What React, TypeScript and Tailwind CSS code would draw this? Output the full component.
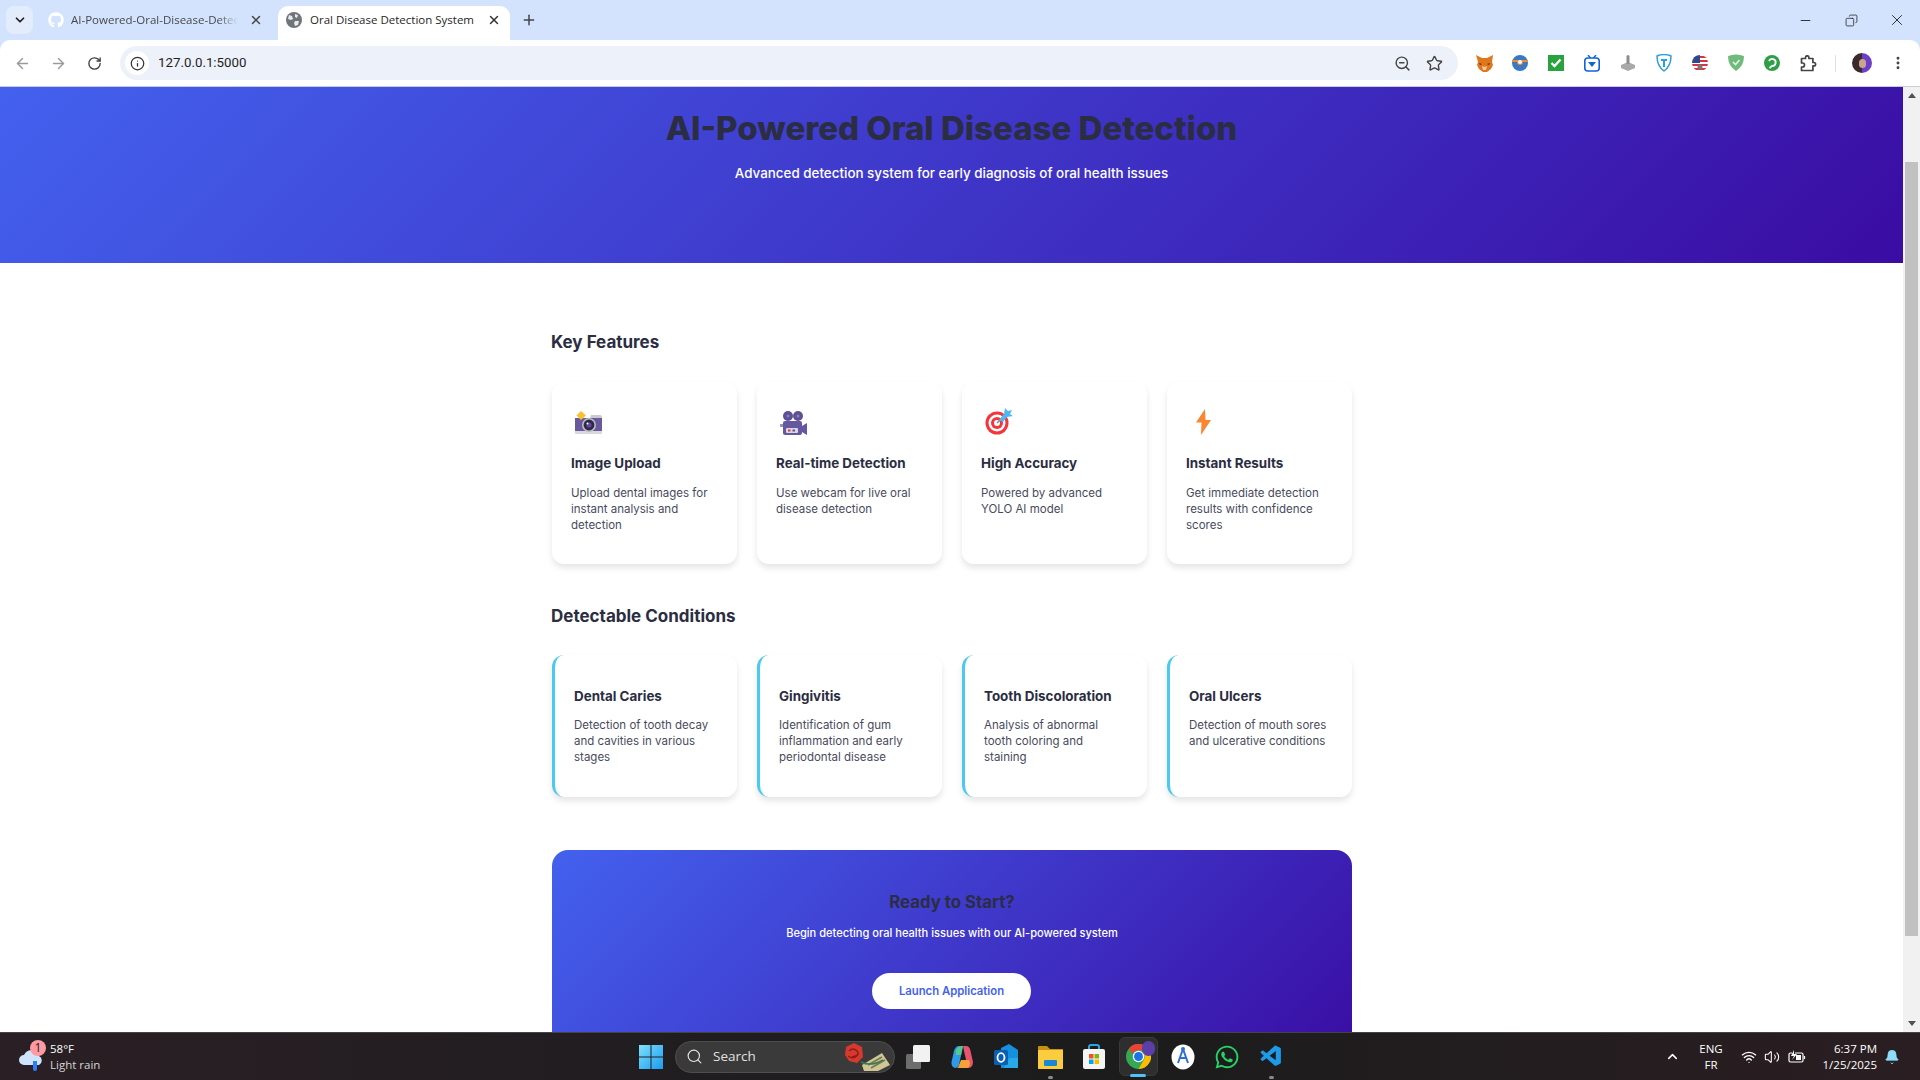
import React from "react";
import { ArrowLeft, ArrowRight, RotateCw, Info, ZoomOut, Star, EllipsisVertical, X, Plus, ChevronDown, Minus, Copy, Wifi, Volume2, Bell, ChevronUp, Search } from "lucide-react";
import { FaGithub, FaWhatsapp } from "react-icons/fa";
import { VscVscode } from "react-icons/vsc";

const ui = "font-['Open_Sans',sans-serif]";

function Globe() {
  return (
    <svg width="16" height="16" viewBox="0 0 16 16" className="shrink-0">
      <circle cx="8" cy="8" r="8" fill="#70757a" />
      <path d="M3 3l3 1 1 3-2 1-3-1zM9 2l3 1-1 3-2-1zM9 9l4 0-1 4-3 1-1-3z" fill="#fff" opacity=".85" />
    </svg>
  );
}

function Fox() {
  return (
    <svg width="17" height="17" viewBox="0 0 17 17">
      <path d="M0 0l6 3h5l6-3-1 7 1 3-2 4-4 3H7l-4-3-2-4 1-3z" fill="#e2761b" />
      <path d="M6 11l2.500 1L11 11l-1 4H7z" fill="#f6c9a0" />
      <path d="M3 8l3 1-2 1zM14 8l-3 1 2 1z" fill="#233447" />
    </svg>
  );
}
function ExtRing() {
  return (
    <svg width="16" height="16" viewBox="0 0 16 16">
      <circle cx="8" cy="8" r="8" fill="#3b78c2" />
      <path d="M0 5h16v2H11a3 3 0 1 1-6 0H0z" fill="#ef8b3a" />
      <circle cx="8" cy="7" r="2" fill="#fff" />
    </svg>
  );
}
function ExtCheck() {
  return (
    <svg width="16" height="16" viewBox="0 0 16 16">
      <rect width="16" height="16" fill="#28a33d" />
      <path d="M3.500 8l3 3 6-6.500" stroke="#fff" strokeWidth="2.400" fill="none" />
    </svg>
  );
}
function ExtTv() {
  return (
    <svg width="16" height="17" viewBox="0 0 16 17">
      <path d="M4 0l2.500 3M12 0L9.500 3" stroke="#0b64d8" strokeWidth="1.400" />
      <rect x=".8" y="3" width="14.400" height="13" rx="3" fill="#fff" stroke="#0b64d8" strokeWidth="1.600" />
      <path d="M4 7h8l-4 5z" fill="#0b64d8" />
    </svg>
  );
}
function ExtJoy() {
  return (
    <svg width="16" height="18" viewBox="0 0 16 18">
      <path d="M1 11l7-3 7 3v3l-7 3-7-3z" fill="#a9a9a9" />
      <rect x="6.500" y="1" width="3" height="9" rx="1.500" fill="#8d8d8d" />
    </svg>
  );
}
function ExtShieldBlue() {
  return (
    <svg width="16" height="18" viewBox="0 0 16 18">
      <path d="M1 2q7-3 14 0 0 10-7 15Q1 12 1 2z" fill="#fff" stroke="#2b9fe0" strokeWidth="1.500" />
      <path d="M5 5h6v2H9v6H7V7H5z" fill="#2b9fe0" />
    </svg>
  );
}
function ExtFlag() {
  return (
    <svg width="16" height="16" viewBox="0 0 16 16">
      <clipPath id="fc"><circle cx="8" cy="8" r="8" /></clipPath>
      <g clipPath="url(#fc)">
        <rect width="16" height="16" fill="#fff" />
        <path d="M0 1h16v2H0zM7 5h9v2H7zM0 9h16v2H0zM0 13h16v2H0z" fill="#d8343f" />
        <rect width="8" height="8" fill="#2c4a8c" />
        <circle cx="8" cy="12" r="2.500" fill="#777" />
      </g>
    </svg>
  );
}
function ExtGuard() {
  return (
    <svg width="16" height="18" viewBox="0 0 16 18">
      <path d="M0 2q8-3 16 0 0 10-8 15Q0 12 0 2z" fill="#6fbb7b" />
      <path d="M5 8l2.500 2.500L11.500 6" stroke="#e4f4e6" strokeWidth="1.600" fill="none" />
    </svg>
  );
}
function ExtGreen() {
  return (
    <svg width="16" height="16" viewBox="0 0 16 16">
      <circle cx="8" cy="8" r="8" fill="#2f9e47" />
      <path d="M5 6a3.500 3.500 0 1 1 3 5l-2.500 2" stroke="#fff" strokeWidth="1.800" fill="none" />
    </svg>
  );
}
function PuzzlePiece() {
  return (
    <svg width="17" height="17" viewBox="0 0 17 17" fill="none" stroke="#444" strokeWidth="1.700" strokeLinejoin="round">
      <path d="M1.500 3.500h4V2.500a1.700 1.700 0 0 1 3.400 0v1h4v4h1a1.700 1.700 0 0 1 0 3.400h-1v4.600H1.500v-3.500h1a2 2 0 0 0 0-4h-1z" />
    </svg>
  );
}

function TabBar() {
  return (
    <div className={`flex h-[40px] items-end ${ui}`}>
      <div className="ml-[6px] mb-[6px] w-[27px] h-[28px] rounded-lg bg-[#e3ecfb] flex items-center justify-center">
        <ChevronDown size={14} strokeWidth={3} className="text-[#1f1f1f]" />
      </div>
      <div className="ml-[15px] w-[230px] h-[40px] flex items-center">
        <FaGithub size={16} className="text-white shrink-0" />
        <span className="ml-[7px] text-[11.500px] text-[#474747] whitespace-nowrap w-[167px] [mask-image:linear-gradient(90deg,#000_88%,transparent)]">AI-Powered-Oral-Disease-Detec</span>
        <X size={14} strokeWidth={2.500} className="text-[#444] shrink-0 ml-[11px]" />
      </div>
      <div className="w-[232px] h-[34px] bg-white rounded-t-[10px] flex items-start pt-[6px] pl-[8px]">
        <Globe />
        <span className="ml-[8px] text-[11.500px] leading-[16px] text-[#1f1f1f] whitespace-nowrap w-[177px]">Oral Disease Detection System</span>
        <X size={14} strokeWidth={2.500} className="text-[#333] mt-[1px]" />
      </div>
      <Plus size={16} strokeWidth={2.200} className="ml-[11px] mb-[12px] text-[#444]" />
      <div className="flex-1" />
      <div className="flex h-[40px] items-center text-[#1f1f1f]">
        <div className="w-[46px] flex justify-center"><Minus size={15} strokeWidth={1.400} /></div>
        <div className="w-[46px] flex justify-center"><Copy size={13} strokeWidth={1.400} className="scale-x-[-1]" /></div>
        <div className="w-[46px] flex justify-center"><X size={18} strokeWidth={1.200} /></div>
      </div>
    </div>
  );
}

function IconBox({ children }: { children: React.ReactNode }) {
  return <div className="w-9 h-[46px] flex items-center justify-center shrink-0">{children}</div>;
}

function Toolbar() {
  return (
    <div className={`flex h-[47px] bg-white rounded-t-[10px] items-start pl-[4px] border-b border-[#c8ccd4] ${ui}`}>
      <IconBox><ArrowLeft size={17} className="text-[#9a9a9a]" /></IconBox>
      <IconBox><ArrowRight size={17} className="text-[#9a9a9a]" /></IconBox>
      <IconBox><RotateCw size={15} strokeWidth={2.200} className="text-[#444]" /></IconBox>
      <div className="ml-[8px] mt-[6px] w-[1338px] h-[34px] rounded-full bg-[#edf2fa] flex items-center pl-[5px]">
        <div className="w-[24px] h-[24px] rounded-full bg-white flex items-center justify-center">
          <Info size={15} strokeWidth={2} className="text-[#333]" />
        </div>
        <span className="ml-[9px] text-[13.300px] text-[#1f1f1f] font-['Roboto',sans-serif]">127.0.0.1:5000</span>
        <div className="flex-1" />
        <ZoomOut size={17} strokeWidth={2} className="text-[#444]" />
        <Star size={17} strokeWidth={2} className="ml-[15px] mr-[15px] text-[#444]" />
      </div>
      <div className="ml-[8px] flex">
        <IconBox><Fox /></IconBox>
        <IconBox><ExtRing /></IconBox>
        <IconBox><ExtCheck /></IconBox>
        <IconBox><ExtTv /></IconBox>
        <IconBox><ExtJoy /></IconBox>
        <IconBox><ExtShieldBlue /></IconBox>
        <IconBox><ExtFlag /></IconBox>
        <IconBox><ExtGuard /></IconBox>
        <IconBox><ExtGreen /></IconBox>
        <IconBox><PuzzlePiece /></IconBox>
      </div>
      <div className="ml-[9px] mt-[15px] w-[1px] h-[17px] bg-[#d3e3fd]" />
      <div className="ml-[16px] mt-[13px] w-[20px] h-[20px] rounded-full bg-[linear-gradient(90deg,#3a2a2a_50%,#6d3fc9_50%)] flex items-center justify-center">
        <div className="w-[7px] h-[9px] rounded-full bg-[#c9a48e]" />
      </div>
      <div className="ml-[16px] h-[46px] w-[20px] flex items-center justify-center">
        <EllipsisVertical size={16} strokeWidth={2.400} className="text-[#444]" />
      </div>
    </div>
  );
}

function CameraIcon() {
  return (
    <svg width="28" height="24" viewBox="0 0 28 24">
      <rect x="0" y="7" width="27" height="15" fill="#6a5a9c" />
      <path d="M0 7h27v-1a2 2 0 0 0-2-2H16l-1 3z" fill="#c9c9d2" />
      <rect x="0" y="20" width="27" height="3" fill="#d9d9e0" />
      <path d="M6 0l5 4.500L6 9 1.500 4.500z" fill="#fbc02d" />
      <circle cx="14" cy="14" r="7" fill="#bdbdbd" />
      <circle cx="14" cy="14" r="5.400" fill="#2e2650" />
      <circle cx="14" cy="14" r="2.600" fill="#5e4e8d" />
      <circle cx="12.500" cy="12.500" r="1" fill="#fff" />
    </svg>
  );
}
function VideoIcon() {
  return (
    <svg width="28" height="24" viewBox="0 0 28 24">
      <circle cx="8" cy="5" r="5" fill="#5e5095" />
      <circle cx="18" cy="5" r="5" fill="#5e5095" />
      <circle cx="8" cy="5" r="1.500" fill="#8a7db8" />
      <circle cx="18" cy="5" r="1.500" fill="#8a7db8" />
      <rect x="3" y="10" width="19" height="14" rx="2" fill="#65589e" />
      <path d="M22 15l5-3v12l-5-3z" fill="#65589e" />
      <rect x="0" y="13" width="3" height="3" fill="#9a90bd" />
      <rect x="6" y="17" width="12" height="5" rx="1" fill="#d9d6e6" />
      <rect x="8" y="18.500" width="2.500" height="2" fill="#e53935" />
      <rect x="12.500" y="18.500" width="2.500" height="2" fill="#5e5095" />
    </svg>
  );
}
function TargetIcon() {
  return (
    <svg width="28" height="28" viewBox="0 0 28 28">
      <circle cx="12" cy="16" r="11.500" fill="#f4353b" />
      <circle cx="12" cy="16" r="8.500" fill="#fff" />
      <circle cx="12" cy="16" r="6" fill="#f4353b" />
      <circle cx="12" cy="16" r="3" fill="#fff" />
      <path d="M12 16L22 6" stroke="#7a8c99" strokeWidth="1.500" />
      <path d="M14 13l5-6 1-6 3 3 4-1-2 4 3 2-6 1-4 5z" fill="#4fb8f0" />
    </svg>
  );
}
function BoltIcon() {
  return (
    <svg width="16" height="26" viewBox="0 0 16 26">
      <path d="M9 0L0 13.500h5.500L5 26l10-15H9.500z" fill="#fb8530" />
    </svg>
  );
}

const features = [
  { icon: <CameraIcon />, title: "Image Upload", text: ["Upload dental images for", "instant analysis and", "detection"] },
  { icon: <VideoIcon />, title: "Real-time Detection", text: ["Use webcam for live oral", "disease detection"] },
  { icon: <TargetIcon />, title: "High Accuracy", text: ["Powered by advanced", "YOLO AI model"] },
  { icon: <BoltIcon />, title: "Instant Results", text: ["Get immediate detection", "results with confidence", "scores"] },
];
const conditions = [
  { title: "Dental Caries", text: ["Detection of tooth decay", "and cavities in various", "stages"] },
  { title: "Gingivitis", text: ["Identification of gum", "inflammation and early", "periodontal disease"] },
  { title: "Tooth Discoloration", text: ["Analysis of abnormal", "tooth coloring and", "staining"] },
  { title: "Oral Ulcers", text: ["Detection of mouth sores", "and ulcerative conditions"] },
];

function Lines({ lines }: { lines: string[] }) {
  return (
    <p className="text-[11.500px] leading-[16px] text-[#4a4a5e]">
      {lines.map((l) => (
        <span key={l} className="block whitespace-nowrap">{l}</span>
      ))}
    </p>
  );
}

function Page() {
  return (
    <div className="flex-1 min-w-0 bg-white overflow-hidden font-['Inter',sans-serif]">
      <div className="h-[176px] bg-[linear-gradient(135deg,#4361ee,#3a0ca3)] text-center pt-[19px]">
        <h1 className="text-[33px] leading-[44px] font-extrabold text-[#2b2d42]">AI-Powered Oral Disease Detection</h1>
        <p className="mt-[12px] text-[13.400px] leading-[22px] font-medium text-white">Advanced detection system for early diagnosis of oral health issues</p>
      </div>
      <div className="w-[801px] ml-[551px]">
        <h2 className="mt-[67px] text-[17px] leading-[24px] font-bold text-[#2b2d42]">Key Features</h2>
        <div className="mt-[28px] ml-px grid grid-cols-4 gap-[20px]">
          {features.map((f) => (
            <div key={f.title} className="h-[182px] bg-white rounded-xl shadow-[0_4px_6px_rgba(0,0,0,0.1)] pl-[19px]">
              <div className="h-[71px] w-[32px] flex items-end justify-center pb-[18px] pl-[4px]">{f.icon}</div>
              <h3 className="text-[13.400px] leading-[20px] font-bold text-[#2b2d42]">{f.title}</h3>
              <div className="mt-[12px]"><Lines lines={f.text} /></div>
            </div>
          ))}
        </div>
        <h2 className="mt-[40px] text-[17px] leading-[24px] font-bold text-[#2b2d42]">Detectable Conditions</h2>
        <div className="mt-[27px] ml-px grid grid-cols-4 gap-[20px]">
          {conditions.map((c) => (
            <div key={c.title} className="h-[142px] bg-white rounded-xl border-l-[3px] border-[#4cc9f0] shadow-[0_4px_6px_rgba(0,0,0,0.1)] pl-[19px] pt-[31px]">
              <h3 className="text-[13.400px] leading-[20px] font-bold text-[#2b2d42]">{c.title}</h3>
              <div className="mt-[11px]"><Lines lines={c.text} /></div>
            </div>
          ))}
        </div>
        <div className="mt-[53px] ml-px h-[220px] rounded-2xl bg-[linear-gradient(135deg,#4361ee,#3a0ca3)] text-center pt-[41px]">
          <h2 className="text-[16.800px] leading-[22px] font-bold text-[#2b2d42]">Ready to Start?</h2>
          <p className="mt-[11px] text-[11.100px] leading-[18px] font-medium text-white">Begin detecting oral health issues with our AI-powered system</p>
          <div className="mt-[31px] ml-[320px] w-[159px] h-[36px] rounded-full bg-white flex items-center justify-center text-[11.300px] font-semibold text-[#4361ee]">Launch Application</div>
        </div>
      </div>
    </div>
  );
}

function Scrollbar() {
  return (
    <div className="w-[17px] shrink-0 bg-[#f1f1f1] flex flex-col items-center overflow-hidden">
      <div className="h-[17px] flex items-center justify-center">
        <div className="w-0 h-0 border-x-[4px] border-x-transparent border-b-[5px] border-b-[#505050]" />
      </div>
      <div className="mt-[58px] w-[13px] h-[774px] bg-[#c1c1c1]" />
      <div className="flex-1" />
      <div className="h-[17px] flex items-center justify-center">
        <div className="w-0 h-0 border-x-[4px] border-x-transparent border-t-[5px] border-t-[#505050]" />
      </div>
    </div>
  );
}

function WinLogo() {
  return (
    <svg width="24" height="24" viewBox="0 0 24 24">
      <defs>
        <linearGradient id="wl" x1="0" y1="0" x2="1" y2="1"><stop offset="0" stopColor="#7fe0fb" /><stop offset="1" stopColor="#1a9bf0" /></linearGradient>
      </defs>
      <path d="M0 0h11.500v11.500H0zM12.500 0H24v11.500H12.500zM0 12.500h11.500V24H0zM12.500 12.500H24V24H12.500z" fill="url(#wl)" />
    </svg>
  );
}
function TaskView() {
  return (
    <svg width="24" height="24" viewBox="0 0 24 24">
      <rect x="0" y="9" width="15" height="15" rx="1.500" fill="#6d6d6d" />
      <rect x="7" y="0" width="17" height="17" rx="1.500" fill="#f2f2f2" />
    </svg>
  );
}
function Copilot() {
  return (
    <svg width="22" height="24" viewBox="0 0 22 24">
      <path d="M7 1h5L8 20q-1 3-4 3-4-1-3.500-6L3 6q1-4 4-5z" fill="#2f9ae8" />
      <path d="M12 1h4q3 1 3.500 5L22 17q0 5-4 6h-5q3-1 3-4L13 6q-.5-3-1-5z" fill="#e8546f" />
      <path d="M5 5q2-4 7-4l-2 9H5z" fill="#55c98d" />
      <path d="M8 20l2-5h8l1 3q0 5-4 5H6q2-1 2-3z" fill="#f5a13a" />
    </svg>
  );
}
function Outlook() {
  return (
    <svg width="24" height="26" viewBox="0 0 24 26">
      <path d="M7 4l8-4 9 6v16a2 2 0 0 1-2 2H7z" fill="#1490df" />
      <path d="M15 14h9v10H10z" fill="#28a8ea" />
      <rect x="0" y="6" width="14" height="15" rx="1.500" fill="#0a5fb4" />
      <ellipse cx="7" cy="13.500" rx="3.500" ry="4.300" fill="none" stroke="#fff" strokeWidth="1.800" />
    </svg>
  );
}
function Explorer() {
  return (
    <svg width="25" height="24" viewBox="0 0 25 24">
      <path d="M0 2a1 1 0 0 1 1-1h8l3 3h13v19a1 1 0 0 1-1 1H1a1 1 0 0 1-1-1z" fill="#c98f10" />
      <rect x="0" y="5" width="25" height="19" rx="1" fill="#fccc3f" />
      <rect x="6" y="15" width="13" height="6" rx="1" fill="#1c86d6" />
    </svg>
  );
}
function Store() {
  return (
    <svg width="24" height="26" viewBox="0 0 24 26">
      <path d="M7 6V3a2 2 0 0 1 2-2h6a2 2 0 0 1 2 2v3" stroke="#29a5e8" strokeWidth="2" fill="none" />
      <rect x="1" y="5" width="22" height="20" rx="2" fill="#f4f4f4" />
      <rect x="7" y="10" width="4.500" height="4.500" fill="#f25022" />
      <rect x="12.500" y="10" width="4.500" height="4.500" fill="#7fba00" />
      <rect x="7" y="15.500" width="4.500" height="4.500" fill="#00a4ef" />
      <rect x="12.500" y="15.500" width="4.500" height="4.500" fill="#ffb900" />
    </svg>
  );
}
function ChromeLogo() {
  return (
    <svg width="25" height="25" viewBox="0 0 24 24">
      <circle cx="12" cy="12" r="12" fill="#34a853" />
      <path d="M12 0a12 12 0 0 1 10.400 6H12a6 6 0 0 0-5.600 3.800L2.800 4.200A12 12 0 0 1 12 0z" fill="#ea4335" />
      <path d="M22.400 6A12 12 0 0 1 12 24l5.200-9A6 6 0 0 0 16 8z" fill="#fbbc04" />
      <circle cx="12" cy="12" r="5.500" fill="#fff" />
      <circle cx="12" cy="12" r="4.300" fill="#1a73e8" />
    </svg>
  );
}
function Assistant() {
  return (
    <svg width="24" height="26" viewBox="0 0 24 26">
      <ellipse cx="12" cy="13" rx="11.500" ry="12.500" fill="#fff" />
      <path d="M12 5l-5 14M12 5l5 14M8 14h8" stroke="#2f6fd6" strokeWidth="2" fill="none" />
      <circle cx="12" cy="5" r="2" fill="#2f6fd6" />
    </svg>
  );
}
function Sprig() {
  return (
    <svg width="46" height="28" viewBox="0 0 46 28">
      <path d="M18 22L38 10l8 12-12 6H20z" fill="#cfc596" />
      <path d="M24 22l14-8M27 25l14-8" stroke="#6f7a4a" strokeWidth="1.500" />
      <path d="M17 19q10 5 22-2" stroke="#3e7a4e" strokeWidth="1.500" fill="none" />
      <path d="M2 4l8-4 8 4 1 10-6 6-8-2-4-6z" fill="#d8392f" />
      <path d="M5 8q4-4 8 0t-5 6M4 13q5 4 10-1" stroke="#8f1c18" strokeWidth="1.400" fill="none" />
    </svg>
  );
}
function Battery() {
  return (
    <svg width="18" height="14" viewBox="0 0 18 14" fill="none" stroke="#fff" strokeWidth="1.200">
      <path d="M4 3H2.500A1.500 1.500 0 0 0 1 4.500v6A1.500 1.500 0 0 0 2.500 12h11a1.500 1.500 0 0 0 1.500-1.500v-6A1.500 1.500 0 0 0 13.500 3H7" />
      <rect x="8" y="5" width="5" height="5" fill="#fff" stroke="none" />
      <path d="M6 0L3 6h3L4 10l5-6H6z" fill="#fff" stroke="none" />
      <path d="M16.500 6v3" />
    </svg>
  );
}

function Slot({ children, mark }: { children: React.ReactNode; mark?: boolean }) {
  return (
    <div className="relative w-[44px] h-[48px] flex items-center justify-center shrink-0">
      {children}
      {mark && <div className="absolute bottom-[2px] left-[20px] w-[5px] h-[3px] rounded-full bg-[#8a8a8a]" />}
    </div>
  );
}

function Taskbar() {
  return (
    <div className={`h-[48px] shrink-0 border-t border-[#444] bg-[linear-gradient(90deg,#2a1f24_0%,#1f1d1f_40%,#1c1c1c_60%,#2a1e22_100%)] flex items-center text-white ${ui}`}>
      <div className="w-[639px] shrink-0 flex items-center pl-[19px]">
        <div className="relative w-[31px] h-[32px]">
          <svg width="24" height="26" viewBox="0 0 24 26" className="mt-[6px]">
            <path d="M5 18a5 5 0 0 1 0-10 8 8 0 0 1 15 1 5 5 0 0 1 0 9z" fill="#cfe3fb" />
            <path d="M14 14h4v8a2 2 0 0 1-4 0z" fill="#2b7fff" />
          </svg>
          <div className="absolute left-[11px] -top-[1px] w-[16px] h-[16px] rounded-full bg-[#ff9aa2] text-[#1c1c1c] text-[12px] leading-[16px] text-center">1</div>
        </div>
        <div className="text-[11.500px] leading-[16px]">
          <div>58°F</div>
          <div className="text-[#d5d5d5]">Light rain</div>
        </div>
      </div>
      <WinLogo />
      <div className="ml-[12px] w-[220px] h-[32px] rounded-full bg-[#3a3a3a] border border-[#4e4e4e] flex items-center pl-[10px]">
        <Search size={17} strokeWidth={1.600} className="text-[#e6e6e6]" />
        <span className="ml-[10px] text-[13.500px] text-[#e0e0e0]">Search</span>
        <div className="flex-1" />
        <div className="mr-[4px]"><Sprig /></div>
      </div>
      <div className="ml-[1px] flex">
        <Slot><TaskView /></Slot>
        <Slot><Copilot /></Slot>
        <Slot><Outlook /></Slot>
        <Slot mark><Explorer /></Slot>
        <Slot><Store /></Slot>
        <div className="relative w-[45px] h-[48px] flex items-center justify-center shrink-0">
          <div className="absolute left-[3px] top-[4px] w-[39px] h-[39px] rounded-md bg-[#2e2e2e] border border-[#3a3a3a]" />
          <div className="relative"><ChromeLogo /></div>
          <div className="absolute right-[6px] top-[8px] w-[13px] h-[15px] rounded-full bg-[#5b3ea8]" />
          <div className="absolute bottom-[4px] left-[14px] w-[16px] h-[3px] rounded-full bg-[#4fc3f7]" />
        </div>
        <Slot><Assistant /></Slot>
        <Slot><FaWhatsapp size={26} className="text-[#25d366]" /></Slot>
        <Slot mark><VscVscode size={25} className="text-[#1e9be8]" /></Slot>
      </div>
      <div className="flex-1" />
      <ChevronUp size={15} strokeWidth={2.400} className="text-white" />
      <div className="ml-[14px] w-[34px] text-center text-[11.500px] leading-[16px]">
        <div>ENG</div>
        <div>FR</div>
      </div>
      <Wifi size={16} strokeWidth={2} className="ml-[13px]" />
      <Volume2 size={16} strokeWidth={1.600} className="ml-[7px]" />
      <div className="ml-[8px]"><Battery /></div>
      <div className="ml-[3px] w-[68px] text-right text-[11.500px] leading-[16px] whitespace-nowrap">
        <div>6:37 PM</div>
        <div>1/25/2025</div>
      </div>
      <Bell size={16} fill="#8fdcfb" strokeWidth={1} className="ml-[7px] mr-[20px] text-[#8fdcfb]" />
    </div>
  );
}

export default function App() {
  return (
    <div className="h-screen w-[1920px] overflow-hidden flex flex-col bg-[#d3e3fd]">
      <TabBar />
      <Toolbar />
      <div className="flex-1 min-h-0 flex">
        <Page />
        <Scrollbar />
      </div>
      <Taskbar />
    </div>
  );
}
